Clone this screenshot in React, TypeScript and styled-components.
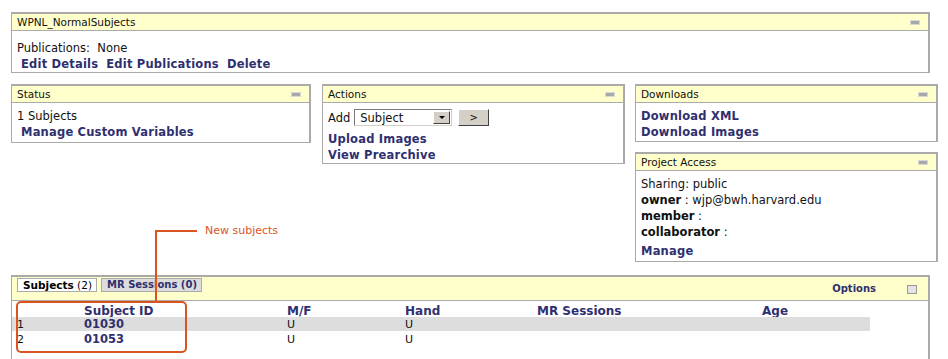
import React from "react";
import styled, { createGlobalStyle } from "styled-components";

const Color = {
  border: "#aaaaaa",
  header: "#ffffcc",
  link: "#2f2f6f",
  text: "#111111",
  stripe: "#dddddd",
  note: "#d9541e",
};

const GlobalStyle = createGlobalStyle`
  html, body {
    margin: 0;
    padding: 0;
    background: #ffffff;
  }
  body {
    font-family: "DejaVu Sans", Verdana, sans-serif;
    font-size: 11.5px;
    color: ${Color.text};
  }
`;

const Page = styled.div`
  position: relative;
  width: 948px;
  height: 359px;
  overflow: hidden;
  padding: 12px 0 0 11px;
  box-sizing: border-box;
`;

const Box = styled.div<{ $width?: number }>`
  width: ${(p) => (p.$width ? `${p.$width}px` : "auto")};
  box-sizing: border-box;
  border: 1px solid ${Color.border};
  border-top-width: 2px;
  border-right-width: 2px;
  background: #fff;
`;

const Header = styled.div<{ $tall?: boolean }>`
  display: flex;
  align-items: ${(p) => (p.$tall ? "flex-start" : "center")};
  justify-content: space-between;
  height: ${(p) => (p.$tall ? 23 : 16)}px;
  padding: 0 9px 0 5px;
  background: ${Color.header};
  border-bottom: 1px solid ${Color.border};
  font-size: 10.5px;
  line-height: 16px;
`;

const Minimize = styled.span`
  display: block;
  width: 8px;
  height: 3px;
  background: #a8a8a8;
  outline: 1px solid #d8d8d8;
`;

const Body = styled.div<{ $top?: number; $bottom?: number }>`
  padding: ${(p) => p.$top ?? 5}px 6px ${(p) => p.$bottom ?? 2}px 5px;
  line-height: 16px;
`;

const LinkText = styled.a<{ $indent?: boolean }>`
  display: inline-block;
  color: ${Color.link};
  font-weight: bold;
  letter-spacing: 0.2px;
  text-decoration: none;
  padding-left: ${(p) => (p.$indent ? 4 : 0)}px;
  cursor: pointer;
`;

const Line = styled.div<{ $gap?: number }>`
  height: 16px;
  margin-top: ${(p) => p.$gap ?? 0}px;
`;

const LinkRow = styled.div`
  display: flex;
  gap: 8px;
  padding-left: 4px;
`;

const Columns = styled.div`
  display: grid;
  grid-template-columns: 300px 303px 302px;
  column-gap: 11px;
  align-items: start;
  margin-top: 11px;
`;

const Stack = styled.div`
  display: flex;
  flex-direction: column;
  gap: 10px;
  margin-left: -1px;
`;

const AddRow = styled.div`
  display: flex;
  align-items: center;
  height: 17px;
  margin: 1px 0 5px;
  gap: 4px;
`;

const Select = styled.div`
  display: flex;
  align-items: center;
  justify-content: space-between;
  width: 98px;
  height: 17px;
  box-sizing: border-box;
  border: 1px solid #7a7a7a;
  border-right-color: #d4d0c8;
  border-bottom-color: #d4d0c8;
  padding: 0 1px 0 5px;
  font-size: 11.5px;
`;

const Arrow = styled.span`
  display: flex;
  align-items: center;
  justify-content: center;
  width: 17px;
  height: 13px;
  box-sizing: border-box;
  background: #d4d0c8;
  border: 1px solid;
  border-color: #fff #404040 #404040 #fff;
  &::after {
    content: "";
    border-left: 3px solid transparent;
    border-right: 3px solid transparent;
    border-top: 3px solid #000;
  }
`;

const GoButton = styled.span`
  display: flex;
  align-items: center;
  justify-content: center;
  width: 31px;
  height: 17px;
  margin-left: 2px;
  box-sizing: border-box;
  background: #d4d0c8;
  border: 1px solid;
  border-color: #fff #404040 #404040 #fff;
  font-size: 10px;
`;

const Strong = styled.b`
  font-weight: bold;
`;

const ListPanel = styled(Box)`
  margin-top: 13px;
  height: 90px;
`;

const Tabs = styled.div`
  display: flex;
  gap: 4px;
  margin-top: 1px;
`;

const Tab = styled.span<{ $active?: boolean }>`
  display: inline-block;
  height: 14px;
  line-height: 12px;
  padding: 0 4px 0 5px;
  box-sizing: border-box;
  border: 1px solid ${Color.border};
  background: ${(p) => (p.$active ? "#ffffff" : "#dcdcdc")};
  color: ${(p) => (p.$active ? "#000" : Color.link)};
  font-size: ${(p) => (p.$active ? 10.5 : 10)}px;
  font-weight: ${(p) => (p.$active ? "normal" : "bold")};
`;

const Options = styled.div`
  display: flex;
  align-items: center;
  gap: 31px;
  margin-top: 4px;
  margin-right: 2px;
  color: ${Color.link};
  font-weight: bold;
  font-size: 10px;
`;

const OptionBox = styled.span`
  display: block;
  width: 10px;
  height: 9px;
  box-sizing: border-box;
  border: 1px solid #999;
  background: #e4e4e4;
`;

const Table = styled.div`
  display: flex;
  flex-direction: column;
  gap: 1px;
  width: 858px;
`;

const Row = styled.div<{ $head?: boolean; $shade?: boolean }>`
  display: grid;
  grid-template-columns: 72px 203px 118px 132px 225px 108px;
  height: ${(p) => (p.$head ? 15 : 14)}px;
  line-height: ${(p) => (p.$head ? 20 : 15)}px;
  background: ${(p) => (p.$shade ? Color.stripe : "transparent")};
  font-size: ${(p) => (p.$head ? 12 : 11)}px;
  font-weight: ${(p) => (p.$head ? "bold" : "normal")};
  color: ${(p) => (p.$head ? Color.link : Color.text)};
  & > span:first-child {
    padding-left: 5px;
  }
`;

const Id = styled.span`
  color: ${Color.link};
  font-weight: bold;
  font-size: 11.5px;
`;

const NoteLine = styled.div<{ $x: number; $y: number; $w: number; $h: number }>`
  position: absolute;
  left: ${(p) => p.$x}px;
  top: ${(p) => p.$y}px;
  width: ${(p) => p.$w}px;
  height: ${(p) => p.$h}px;
  background: ${Color.note};
`;

const NoteText = styled.div`
  position: absolute;
  left: 205px;
  top: 224px;
  color: ${Color.note};
  font-size: 11px;
  line-height: 14px;
`;

const NoteBox = styled.div`
  position: absolute;
  left: 16px;
  top: 301px;
  width: 171px;
  height: 52px;
  box-sizing: border-box;
  border: 2px solid ${Color.note};
  border-radius: 5px;
`;

type PanelProps = {
  title: string;
  width?: number;
  top?: number;
  bottom?: number;
  children: React.ReactNode;
};

const Panel = ({ title, width, top, bottom, children }: PanelProps) => (
  <Box $width={width}>
    <Header>
      <span>{title}</span>
      <Minimize />
    </Header>
    <Body $top={top} $bottom={bottom}>
      {children}
    </Body>
  </Box>
);

const subjects = [
  { id: "01030", sex: "U", hand: "U" },
  { id: "01053", sex: "U", hand: "U" },
];

export default function App() {
  return (
    <Page>
      <GlobalStyle />
      <Panel title="WPNL_NormalSubjects" width={919} top={9} bottom={0}>
        <Line>Publications:&nbsp; None</Line>
        <LinkRow>
          <LinkText>Edit Details</LinkText>
          <LinkText>Edit Publications</LinkText>
          <LinkText>Delete</LinkText>
        </LinkRow>
      </Panel>

      <Columns>
        <Panel title="Status">
          <Line>1 Subjects</Line>
          <LinkText $indent>Manage Custom Variables</LinkText>
        </Panel>

        <Panel title="Actions" top={5} bottom={0}>
          <AddRow>
            <span>Add</span>
            <Select>
              <span>Subject</span>
              <Arrow />
            </Select>
            <GoButton>&gt;</GoButton>
          </AddRow>
          <Line>
            <LinkText>Upload Images</LinkText>
          </Line>
          <Line>
            <LinkText>View Prearchive</LinkText>
          </Line>
        </Panel>

        <Stack>
          <Panel title="Downloads" bottom={1}>
            <Line>
              <LinkText>Download XML</LinkText>
            </Line>
            <Line>
              <LinkText>Download Images</LinkText>
            </Line>
          </Panel>
          <Panel title="Project Access" top={5} bottom={2}>
            <Line>Sharing: public</Line>
            <Line>
              <Strong>owner</Strong> : wjp@bwh.harvard.edu
            </Line>
            <Line>
              <Strong>member</Strong> :
            </Line>
            <Line>
              <Strong>collaborator</Strong> :
            </Line>
            <Line $gap={3}>
              <LinkText>Manage</LinkText>
            </Line>
          </Panel>
        </Stack>
      </Columns>

      <ListPanel $width={919}>
        <Header $tall>
          <Tabs>
            <Tab $active>
              <Strong>Subjects</Strong> (2)
            </Tab>
            <Tab>MR Sessions (0)</Tab>
          </Tabs>
          <Options>
            <span>Options</span>
            <OptionBox />
          </Options>
        </Header>
        <Table>
          <Row $head>
            <span />
            <span>Subject ID</span>
            <span>M/F</span>
            <span>Hand</span>
            <span>MR Sessions</span>
            <span>Age</span>
          </Row>
          {subjects.map((s, i) => (
            <Row key={s.id} $shade={i % 2 === 0}>
              <span>{i + 1}</span>
              <Id>{s.id}</Id>
              <span>{s.sex}</span>
              <span>{s.hand}</span>
              <span />
              <span />
            </Row>
          ))}
        </Table>
      </ListPanel>

      <NoteLine $x={155} $y={230} $w={42} $h={2} />
      <NoteLine $x={155} $y={230} $w={2} $h={72} />
      <NoteText>New subjects</NoteText>
      <NoteBox />
    </Page>
  );
}
